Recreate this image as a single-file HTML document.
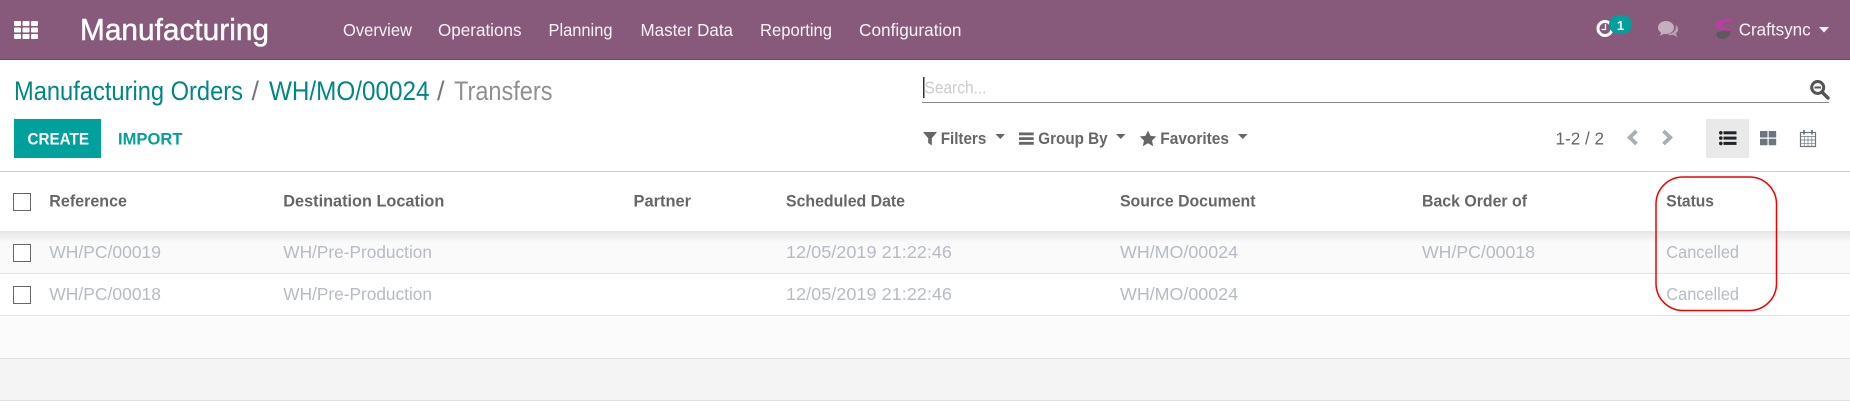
<!DOCTYPE html>
<html lang="en">
<head>
<meta charset="utf-8">
<title>Manufacturing Orders / WH/MO/00024 / Transfers</title>
<style>
html,body{margin:0;padding:0;background:#fff;width:1850px;height:418px;overflow:hidden}
svg{display:block}
text{font-family:"Liberation Sans",sans-serif}
.nav{fill:#fff;fill-opacity:.92;font-size:17.5px}
.th{fill:#666;font-size:17px;font-weight:bold}
.td{fill:#b6bbc4;font-size:17.5px}
.bc{font-size:27px}
.flt{fill:#666;font-size:17px;font-weight:bold}
</style>
</head>
<body>
<svg width="1850" height="418" viewBox="0 0 1850 418" xmlns="http://www.w3.org/2000/svg">
<defs>
<linearGradient id="sh" x1="0" y1="0" x2="0" y2="1">
<stop offset="0" stop-color="#e6e6e6"/><stop offset="1" stop-color="#fafafa"/>
</linearGradient>
</defs>
<rect width="1850" height="418" fill="#fff"/>

<!-- navbar -->
<rect width="1850" height="59" fill="#875a7b"/>
<rect y="59" width="1850" height="1" fill="#6f4a65"/>
<g fill="#fff">
<rect x="14" y="21" width="7" height="5" rx="1"/><rect x="22.5" y="21" width="7" height="5" rx="1"/><rect x="31" y="21" width="7" height="5" rx="1"/>
<rect x="14" y="27.5" width="7" height="5" rx="1"/><rect x="22.5" y="27.5" width="7" height="5" rx="1"/><rect x="31" y="27.5" width="7" height="5" rx="1"/>
<rect x="14" y="34" width="7" height="5" rx="1"/><rect x="22.5" y="34" width="7" height="5" rx="1"/><rect x="31" y="34" width="7" height="5" rx="1"/>
</g>
<text x="80" y="40" fill="#fff" stroke="#fff" stroke-width=".45" font-size="31" textLength="189" lengthAdjust="spacingAndGlyphs">Manufacturing</text>
<text class="nav" x="343" y="36" textLength="69" lengthAdjust="spacingAndGlyphs">Overview</text>
<text class="nav" x="438" y="36" textLength="83.5" lengthAdjust="spacingAndGlyphs">Operations</text>
<text class="nav" x="548.5" y="36" textLength="64" lengthAdjust="spacingAndGlyphs">Planning</text>
<text class="nav" x="640.5" y="36" textLength="92.5" lengthAdjust="spacingAndGlyphs">Master Data</text>
<text class="nav" x="760" y="36" textLength="72" lengthAdjust="spacingAndGlyphs">Reporting</text>
<text class="nav" x="859" y="36" textLength="102.5" lengthAdjust="spacingAndGlyphs">Configuration</text>

<!-- systray -->
<circle cx="1605" cy="28.5" r="7" fill="none" stroke="#fff" stroke-width="3"/>
<path d="M1605.5 24v5.500h-4" fill="none" stroke="#fff" stroke-width="1.300"/>
<rect x="1609" y="15" width="23" height="19" rx="9.5" fill="#00a09d"/>
<text x="1620.5" y="30" fill="#fff" font-size="13" font-weight="bold" text-anchor="middle">1</text>
<path d="M1658 27.500c0-3.800 3.700-6.500 8-6.500s8 2.700 8 6.500-3.700 6.500-8 6.500c-.8 0-1.600-.1-2.400-.3-1.100.9-2.500 1.700-4 1.900.8-.8 1.300-1.900 1.500-3-1.900-1.100-3.100-2.800-3.100-5.100z" fill="#c4aebf"/>
<path d="M1675.500 25c1.700.9 2.700 2.300 2.700 4.100 0 1.700-.8 3-2.200 3.900.2 1.400.7 2.600 1.500 3.900-1.500-.3-2.800-1-3.800-2-.9.200-1.700.3-2.600.2-1.400 0-2.600-.3-3.600-.9 4.600-.3 8.300-3.400 8.300-7 0-.8-.1-1.500-.3-2.200z" fill="#b9a0b4"/>
<path d="M1733 20c-5.500-2.500-14-1.500-16.500 4-1.200 3 1 5 5 5.800 3.200.6 7 .8 10 2.200-.8-2.500-4-3.800-7.500-4.500-2.700-.6-3.800-1.500-2.500-3 2.200-2.300 6.500-3 9.500-2.800l2-1.700z" fill="#c437a9"/>
<path d="M1716.500 33c4-3 10-3 14-1.500 .5 3-2.500 7.500-8.500 7.500-3.500 0-6.500-2.500-5.500-6z" fill="#5c5a5c"/>
<text x="1738.700" y="35.700" fill="#fff" fill-opacity=".92" font-size="17.500" textLength="72" lengthAdjust="spacingAndGlyphs">Craftsync</text>
<path d="M1819 27h10l-5 5.500z" fill="#fff" fill-opacity=".92"/>

<!-- breadcrumb -->
<text class="bc" x="14" y="100" fill="#008784" textLength="229" lengthAdjust="spacingAndGlyphs">Manufacturing Orders</text>
<text class="bc" x="251.500" y="100" fill="#777">/</text>
<text class="bc" x="269" y="100" fill="#008784" textLength="160.500" lengthAdjust="spacingAndGlyphs">WH/MO/00024</text>
<text class="bc" x="437" y="100" fill="#777">/</text>
<text class="bc" x="454" y="100" fill="#909090" textLength="98.500" lengthAdjust="spacingAndGlyphs">Transfers</text>

<!-- buttons -->
<rect x="14" y="119" width="87" height="39" fill="#00a09d"/>
<text x="27.500" y="144.500" fill="#fff" font-size="17" font-weight="bold" textLength="61.500" lengthAdjust="spacingAndGlyphs">CREATE</text>
<text x="118" y="144.500" fill="#00a09d" font-size="17" font-weight="bold" textLength="64.500" lengthAdjust="spacingAndGlyphs">IMPORT</text>

<!-- search -->
<rect x="923" y="77" width="1.500" height="21" fill="#333"/>
<text x="924.500" y="93.500" fill="#ccc" font-size="17.500" textLength="62" lengthAdjust="spacingAndGlyphs">Search...</text>
<rect x="922" y="102" width="907" height="1" fill="#888"/>
<circle cx="1817.700" cy="87.500" r="6" fill="none" stroke="#555" stroke-width="3"/>
<rect x="1814.500" y="86.500" width="6.500" height="2" fill="#555"/>
<path d="M1822.500 92.500l5.500 5.500" stroke="#555" stroke-width="3.400" stroke-linecap="round"/>

<!-- filters -->
<path d="M923 132h14l-5.200 6.300v7.200l-3.600-2.500v-4.700z" fill="#666"/>
<text class="flt" x="940.700" y="144" textLength="45.600" lengthAdjust="spacingAndGlyphs">Filters</text>
<path d="M995.500 134h9.500l-4.750 5z" fill="#666"/>
<path d="M1019 132.500h14.700v2.800h-14.700zM1019 137.200h14.700v2.800h-14.700zM1019 141.900h14.700v2.800h-14.700z" fill="#666"/>
<text class="flt" x="1038.300" y="144" textLength="69.300" lengthAdjust="spacingAndGlyphs">Group By</text>
<path d="M1116 134h9.500l-4.750 5z" fill="#666"/>
<path d="M1148 130.500l2.500 5.300 5.800.7-4.300 4 1.200 5.700-5.200-2.900-5.200 2.900 1.200-5.700-4.300-4 5.800-.7z" fill="#666"/>
<text class="flt" x="1160.300" y="144" textLength="68.700" lengthAdjust="spacingAndGlyphs">Favorites</text>
<path d="M1238 134h9.500l-4.750 5z" fill="#666"/>

<!-- pager -->
<text x="1555.500" y="144.500" fill="#666" font-size="17.500" textLength="48.500" lengthAdjust="spacingAndGlyphs">1-2 / 2</text>
<path d="M1636.500 131l-6.800 6.500 6.800 6.500" fill="none" stroke="#a9aeb4" stroke-width="3.800"/>
<path d="M1663.500 131l6.800 6.500-6.800 6.500" fill="none" stroke="#a9aeb4" stroke-width="3.800"/>

<!-- view switcher -->
<rect x="1706" y="119" width="43" height="39" fill="#e9e9e9"/>
<g fill="#212529">
<rect x="1719" y="131" width="3.600" height="3.600" rx="1.800"/><rect x="1719" y="136.300" width="3.600" height="3.600" rx="1.800"/><rect x="1719" y="141.600" width="3.600" height="3.600" rx="1.800"/>
<rect x="1723.500" y="131.300" width="13" height="3"/><rect x="1723.500" y="136.600" width="13" height="3"/><rect x="1723.500" y="141.900" width="13" height="3"/>
</g>
<g fill="#6c757d">
<rect x="1760" y="131" width="7.500" height="6.500" rx=".5"/><rect x="1768.700" y="131" width="7.500" height="6.500" rx=".5"/>
<rect x="1760" y="138.700" width="7.500" height="6.500" rx=".5"/><rect x="1768.700" y="138.700" width="7.500" height="6.500" rx=".5"/>
</g>
<g fill="none" stroke="#6c757d">
<rect x="1800.500" y="132.500" width="15" height="14" stroke-width="1.200"/>
<path d="M1800.500 136.500h15M1800.500 140h15M1800.500 143.300h15M1804.300 136.500v10M1808 136.500v10M1811.800 136.500v10" stroke-width=".7"/>
<path d="M1804 130v4.500M1812 130v4.500" stroke-width="1.800"/>
</g>

<!-- table -->
<rect y="171" width="1850" height="1" fill="#cccccc"/>
<rect y="231" width="1850" height="42" fill="#fafafa"/>
<rect y="231" width="1850" height="12" fill="url(#sh)"/>
<rect y="273" width="1850" height="1" fill="#e2e2e4"/>
<rect y="315" width="1850" height="1" fill="#e2e2e4"/>
<rect y="316" width="1850" height="42" fill="#fbfbfb"/>
<rect y="358" width="1850" height="1" fill="#e0e0e4"/>
<rect y="359" width="1850" height="41" fill="#f4f4f5"/>
<rect y="400" width="1850" height="1" fill="#e0e0e4"/>

<g fill="#fff" stroke="#666" stroke-width="1">
<rect x="13.500" y="193.500" width="17" height="17"/>
<rect x="13.500" y="244.500" width="17" height="17"/>
<rect x="13.500" y="286.500" width="17" height="17"/>
</g>

<text class="th" x="49.300" y="206.500" textLength="77.700" lengthAdjust="spacingAndGlyphs">Reference</text>
<text class="th" x="283.300" y="206.500" textLength="161" lengthAdjust="spacingAndGlyphs">Destination Location</text>
<text class="th" x="633.500" y="206.500" textLength="57.500" lengthAdjust="spacingAndGlyphs">Partner</text>
<text class="th" x="786" y="206.500" textLength="119" lengthAdjust="spacingAndGlyphs">Scheduled Date</text>
<text class="th" x="1120" y="206.500" textLength="135.500" lengthAdjust="spacingAndGlyphs">Source Document</text>
<text class="th" x="1422" y="206.500" textLength="105" lengthAdjust="spacingAndGlyphs">Back Order of</text>
<text class="th" x="1666.300" y="206.500" textLength="47.700" lengthAdjust="spacingAndGlyphs">Status</text>

<text class="td" x="49.300" y="258" textLength="111.700" lengthAdjust="spacingAndGlyphs">WH/PC/00019</text>
<text class="td" x="283.300" y="258" textLength="148.700" lengthAdjust="spacingAndGlyphs">WH/Pre-Production</text>
<text class="td" x="786" y="258" textLength="166" lengthAdjust="spacingAndGlyphs">12/05/2019 21:22:46</text>
<text class="td" x="1120" y="258" textLength="118" lengthAdjust="spacingAndGlyphs">WH/MO/00024</text>
<text class="td" x="1422" y="258" textLength="113" lengthAdjust="spacingAndGlyphs">WH/PC/00018</text>
<text class="td" x="1666.300" y="258" textLength="72.700" lengthAdjust="spacingAndGlyphs">Cancelled</text>

<text class="td" x="49.300" y="300" textLength="111.700" lengthAdjust="spacingAndGlyphs">WH/PC/00018</text>
<text class="td" x="283.300" y="300" textLength="148.700" lengthAdjust="spacingAndGlyphs">WH/Pre-Production</text>
<text class="td" x="786" y="300" textLength="166" lengthAdjust="spacingAndGlyphs">12/05/2019 21:22:46</text>
<text class="td" x="1120" y="300" textLength="118" lengthAdjust="spacingAndGlyphs">WH/MO/00024</text>
<text class="td" x="1666.300" y="300" textLength="72.700" lengthAdjust="spacingAndGlyphs">Cancelled</text>

<!-- annotation -->
<rect x="1656" y="177" width="120.500" height="133.500" rx="27" ry="27" fill="none" stroke="#f40000" stroke-width="1.500"/>
</svg>
</body>
</html>
